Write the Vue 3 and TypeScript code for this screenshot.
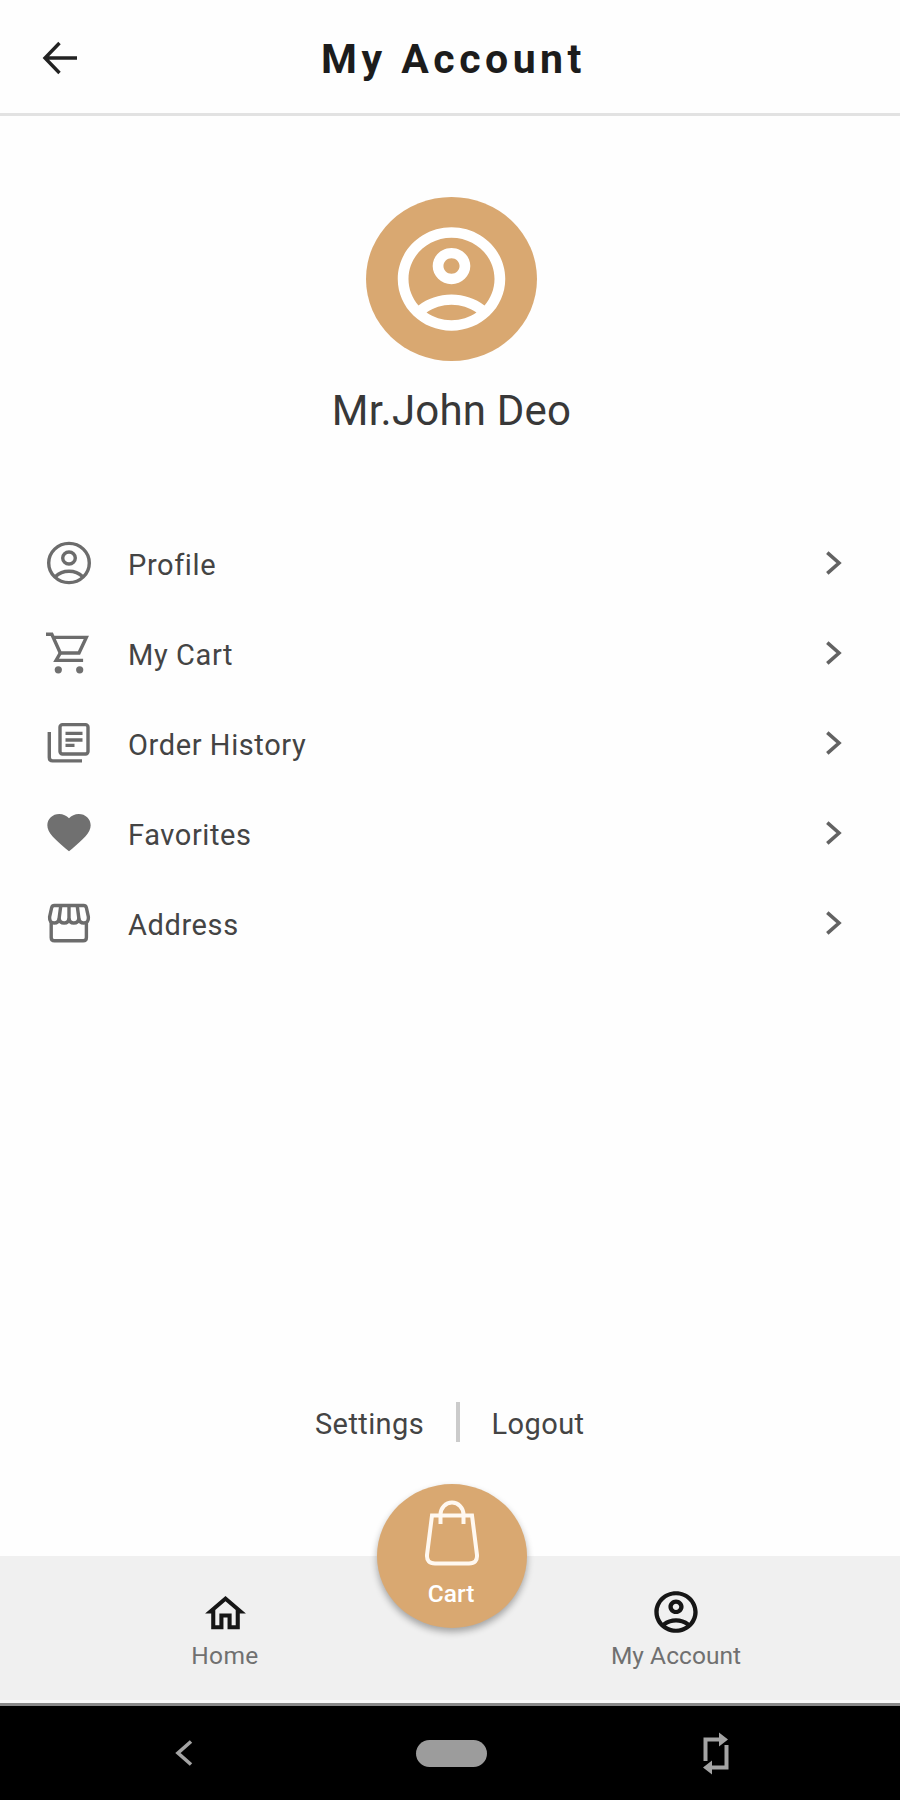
<script setup lang="ts">
import { ref } from 'vue'

type IconName = 'profile' | 'cart' | 'orders' | 'heart' | 'store'
interface MenuItem {
  icon: IconName
  label: string
}

const userName = ref<string>('Mr.John Deo')
const items: MenuItem[] = [
  { icon: 'profile', label: 'Profile' },
  { icon: 'cart', label: 'My Cart' },
  { icon: 'orders', label: 'Order History' },
  { icon: 'heart', label: 'Favorites' },
  { icon: 'store', label: 'Address' },
]

const accountPath =
  'M12 2C6.48 2 2 6.48 2 12s4.48 10 10 10 10-4.48 10-10S17.52 2 12 2zM7.35 18.5C8.66 17.56 10.26 17 12 17s3.34.56 4.65 1.5c-1.31.94-2.91 1.5-4.65 1.5s-3.34-.56-4.65-1.5zm10.79-1.38C16.45 15.8 14.32 15 12 15s-4.45.8-6.14 2.12C4.7 15.73 4 13.95 4 12c0-4.42 3.58-8 8-8s8 3.58 8 8c0 1.95-.7 3.73-1.86 5.12zM12 6c-1.93 0-3.5 1.57-3.5 3.5S10.07 13 12 13s3.5-1.57 3.5-3.5S13.93 6 12 6zm0 5c-.83 0-1.5-.67-1.5-1.5S11.17 8 12 8s1.5.67 1.5 1.5S12.83 11 12 11z'
</script>

<template>
  <div class="screen">
    <header class="topbar">
      <button class="back" aria-label="Back">
        <svg width="36" height="34" viewBox="0 0 36 34">
          <path d="M17.5 2 3 17l14.5 15M3 17h32" />
        </svg>
      </button>
      <h1 class="title">My Account</h1>
    </header>

    <main class="content">
      <section class="identity">
        <div class="avatar">
          <svg width="129" height="124" viewBox="0 0 24 24" preserveAspectRatio="none">
            <path :d="accountPath" />
          </svg>
        </div>
        <p class="name">{{ userName }}</p>
      </section>

      <ul class="menu">
        <li v-for="item in items" :key="item.label" class="row">
          <svg class="row-icon" viewBox="0 0 52 50">
            <template v-if="item.icon === 'profile'">
              <ellipse cx="26" cy="25" rx="20.3" ry="19.6" />
              <ellipse cx="26" cy="20" rx="6.3" ry="6" />
              <path d="M12.5 38.5C16 35 21 33.2 26 33.2S36 35 39.5 38.5" />
            </template>
            <template v-else-if="item.icon === 'cart'">
              <path d="M3 6.3h5.8L17.3 25H36l7.300-15.600H10.500" />
              <path d="M17.300 25l-4.200 7.400h27" />
              <circle class="solid" cx="15.300" cy="41.800" r="3.600" />
              <circle class="solid" cx="36.700" cy="41.800" r="3.600" />
            </template>
            <template v-else-if="item.icon === 'orders'">
              <rect x="17" y="6.6" width="28" height="29.4" rx="2.5" />
              <path d="M6.3 14v25.5q0 3.400 3.400 3.400H39" />
              <path d="M22.500 15.400h17M22.500 22h17M22.500 27.400h9" />
            </template>
            <template v-else-if="item.icon === 'heart'">
              <path
                class="solid"
                transform="scale(2.167 2.03)"
                d="M12 21.35l-1.45-1.32C5.4 15.36 2 12.28 2 8.5 2 5.42 4.42 3 7.5 3c1.74 0 3.41.81 4.5 2.09C13.09 3.81 14.76 3 16.5 3 19.58 3 22 5.42 22 8.5c0 3.78-3.4 6.86-8.55 11.54L12 21.35z"
              />
            </template>
            <template v-else>
              <path d="M8.2 24v15.500q0 3.300 3.300 3.300h28.600q3.300 0 3.300-3.300V24" />
              <path d="M11.3 7.5h29.4q2 0 2.6 2l2.1 9.5q.3 6-4.6 6-4.4 0-4.9-4.8-.6 4.8-5.1 4.8-4.3 0-4.8-4.8-.5 4.8-4.8 4.8-4.5 0-5.1-4.8-.5 4.8-4.9 4.8-4.9 0-4.6-6L8.7 9.5q.6-2 2.6-2z" />
              <path d="M26 7.5v13M17.8 7.5l-1.7 13M34.2 7.5l1.7 13" />
            </template>
          </svg>
          <span class="row-label">{{ item.label }}</span>
          <svg class="chevron" viewBox="0 0 18 26">
            <path d="M2.3 2.6 14 13 2.3 23.4" />
          </svg>
        </li>
      </ul>

      <div class="links">
        <a class="link">Settings</a>
        <span class="separator"></span>
        <a class="link">Logout</a>
      </div>
    </main>

    <nav class="tabs">
      <a class="tab">
        <svg class="home" width="49" height="47" viewBox="0 0 24 24" preserveAspectRatio="none">
          <path d="M12 5.69l5 4.5V18h-2v-6H9v6H7v-7.81l5-4.5M12 3L2 12h3v8h6v-6h2v6h6v-8h3L12 3z" />
        </svg>
        <span>Home</span>
      </a>
      <a class="tab account">
        <svg width="52" height="50" viewBox="0 0 24 24" preserveAspectRatio="none">
          <path :d="accountPath" />
        </svg>
        <span>My Account</span>
      </a>
      <a class="fab">
        <svg width="56" height="66" viewBox="0 0 56 66">
          <path d="M8 15.5h40L53 55q.5 8.500-8 8.500H11Q2.500 63.500 3 55z" />
          <path d="M16.500 24V14.500a11.500 12 0 0 1 23 0V24" />
        </svg>
        <span>Cart</span>
      </a>
    </nav>

    <footer class="system">
      <svg class="sys-back" width="20" height="28" viewBox="0 0 20 28">
        <path d="M17 2.5 4 14l13 11.5" />
      </svg>
      <span class="pill"></span>
      <svg class="sys-rotate" width="28" height="44" viewBox="0 0 28 44">
        <path class="line" d="M3.500 30V8.500H19M24.500 14v22.500H9" />
        <path class="head" d="M17 1.500 26 8.500 17 15.500zM10 29.500 1 36.500l9 7z" />
      </svg>
    </footer>
  </div>
</template>

<style>
body {
  margin: 0;
}
</style>

<style scoped>
.screen {
  width: 900px;
  height: 1800px;
  display: flex;
  flex-direction: column;
  overflow: hidden;
  background: #fefefe;
  color: #444;
  font-family: Roboto, 'Liberation Sans', sans-serif;
}
.topbar {
  box-sizing: border-box;
  height: 116px;
  flex: none;
  display: grid;
  grid-template-columns: 120px 1fr 120px;
  align-items: center;
  border-bottom: 3px solid #e2e2e2;
}
.back {
  margin: 2px 0 0 42px;
  padding: 0;
  border: 0;
  background: none;
  width: 36px;
  height: 34px;
}
.back svg {
  display: block;
  fill: none;
  stroke: #222;
  stroke-width: 3.4;
}
.title {
  margin: 4px 0 0 7px;
  text-align: center;
  font-size: 41px;
  font-weight: 700;
  letter-spacing: 4.5px;
  line-height: 48px;
  color: #1c1c1c;
}
.content {
  flex: 1;
  display: flex;
  flex-direction: column;
}
.identity {
  display: flex;
  flex-direction: column;
  align-items: center;
  padding-top: 81px;
  padding-left: 3px;
}
.avatar {
  width: 171px;
  height: 164px;
  border-radius: 50%;
  background: #d9a871;
  display: flex;
  align-items: center;
  justify-content: center;
}
.avatar svg {
  fill: #fff;
}
.name {
  margin: 25px 0 0;
  font-size: 42px;
  line-height: 50px;
  letter-spacing: 0.2px;
  color: #383838;
}
.menu {
  list-style: none;
  margin: 82px 0 0;
  padding: 0;
}
.row {
  height: 90px;
  display: flex;
  align-items: center;
  padding: 0 57px 0 42.5px;
}
.row-icon {
  width: 52px;
  height: 50px;
  fill: none;
  stroke: #6c6c6c;
  stroke-width: 3.4;
}
.row-icon .solid {
  fill: #707070;
  stroke: none;
}
.row-label {
  flex: 1;
  margin: 3px 0 0 33.5px;
  font-size: 29px;
  line-height: 36px;
  letter-spacing: 0.6px;
}
.chevron {
  width: 18px;
  height: 26px;
  fill: none;
  stroke: #626262;
  stroke-width: 3.6;
}
.links {
  margin-top: 434px;
  display: flex;
  align-items: center;
  padding-left: 315px;
}
.link {
  font-size: 29px;
  line-height: 36px;
  letter-spacing: 0.4px;
  padding-top: 3px;
}
.separator {
  width: 4px;
  height: 40px;
  margin: 0 32px 0 31.5px;
  background: #cbcbcb;
}
.tabs {
  position: relative;
  height: 144px;
  flex: none;
  display: grid;
  grid-template-columns: 1fr 1fr;
  background: #f0f0f0;
  border-bottom: 3px solid #fafafa;
}
.tab {
  display: flex;
  flex-direction: column;
  align-items: center;
  padding-top: 32px;
  font-size: 24.5px;
  line-height: 30px;
  color: #707070;
}
.tab svg {
  fill: #161616;
}
.tab .home {
  margin: 2px 0 1px;
}
.account {
  padding: 31px 0 0 2px;
}
.tab span {
  margin-top: 3px;
  letter-spacing: 0.4px;
}
.account span {
  margin-top: 4px;
  letter-spacing: 0.05px;
}
.fab {
  position: absolute;
  left: 377px;
  top: -72px;
  width: 150px;
  height: 144px;
  border-radius: 50%;
  background: #d9a871;
  box-shadow: 0 4px 7px rgba(0, 0, 0, 0.32);
  display: flex;
  flex-direction: column;
  align-items: center;
  color: #fff;
  font-size: 24.5px;
  line-height: 30px;
  font-weight: 500;
}
.fab svg {
  margin-top: 16px;
  margin-left: -1px;
  fill: none;
  stroke: #fff8f0;
  stroke-width: 4;
}
.fab span {
  margin-top: 13px;
  margin-left: -2px;
}
.system {
  box-sizing: border-box;
  height: 97px;
  flex: none;
  display: flex;
  align-items: center;
  justify-content: space-between;
  padding: 0 170px 0 174px;
  background: #000;
  border-top: 3px solid #8a8a8a;
}
.sys-back {
  fill: none;
  stroke: #a4a4a4;
  stroke-width: 3.6;
}
.pill {
  width: 71px;
  height: 27px;
  margin-left: 6px;
  border-radius: 14px;
  background: #9c9c9c;
}
.sys-rotate .line {
  fill: none;
  stroke: #a4a4a4;
  stroke-width: 4;
}
.sys-rotate .head {
  fill: #a4a4a4;
}
</style>
